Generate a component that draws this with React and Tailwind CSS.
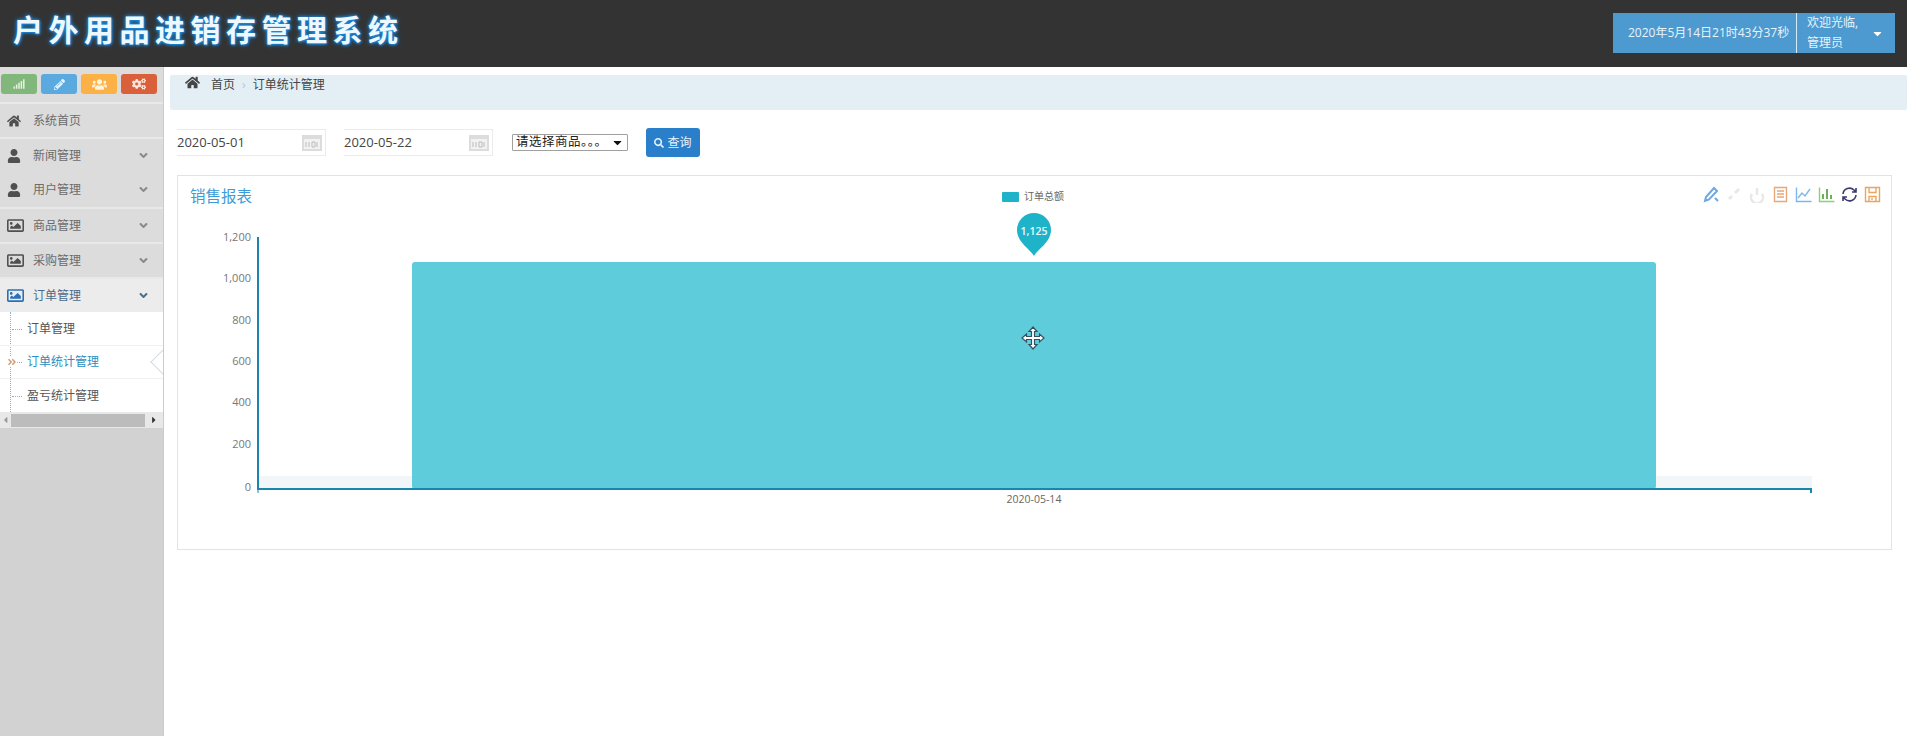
import React from "react";
import { FaHome, FaUser, FaRegImage, FaUsers, FaCogs, FaPencilAlt, FaSignal, FaSearch, FaAngleDown, FaAngleDoubleRight, FaCaretDown, FaCaretLeft, FaCaretRight } from "react-icons/fa";

const font = { fontFamily: '"Open Sans","Noto Sans CJK SC",sans-serif' };

function NavRow({ icon: Icon, label, arrow, active, sep, iconSize = 14 }) {
  return (
    <div className={`flex items-center h-[35px] pl-[7px] pr-[13px] ${sep ? "border-t-2 border-[#e8e8e8]" : ""} ${active ? "bg-[#ececec]" : "bg-[#dcdcdc]"}`}>
      <span className={`w-[26px] flex items-center shrink-0 ${active ? "text-[#2a6fb8]" : "text-[#505050]"}`}>
        <Icon size={iconSize} />
      </span>
      <span className={`text-[12px] ${active ? "text-[#4a6a8a]" : "text-[#6b6b6b]"}`}>{label}</span>
      {arrow && <FaAngleDown size={13} className={`ml-auto ${active ? "text-[#4a6f8f]" : "text-[#8a8a8a]"}`} />}
    </div>
  );
}

function SubRow({ label, active, border }) {
  return (
    <div className={`relative flex items-center h-[33px] pl-[27px] text-[12px] ${border ? "border-b border-[#f0f0f0]" : ""} ${active ? "text-[#2b8fc0]" : "text-[#555]"}`}>
      <span className="absolute left-[12px] top-1/2 w-[10px] border-t border-dotted border-[#aaa]" />
      {active && <FaAngleDoubleRight size={10} className="absolute left-[7px] top-[11px] text-[#d0a07c] bg-white" />}
      {label}
      {active && (
        <span className="absolute right-0 top-[7px] w-[18px] h-[18px] rotate-45 translate-x-[9px] bg-[#fff] border-l border-b border-[#cfdde5]" />
      )}
    </div>
  );
}

function DateInput({ value, className }) {
  return (
    <div className={`flex items-center justify-between w-[149px] h-[27px] border-y border-r border-[#ebebeb] text-[13px] text-[#444] ${className}`}>
      <span>{value}</span>
      <svg width="20" height="16" viewBox="0 0 20 16" className="mr-[3px]">
        <rect width="20" height="16" fill="#dcdcdc" />
        <rect x="2" y="4" width="16" height="10" fill="#f2f2f2" />
        <path d="M4 7v5M7 7v5M10 7h3v5h-3zM15 7v5" stroke="#bbb" fill="none" />
      </svg>
    </div>
  );
}

function Tool({ children }) {
  return <svg width="17" height="17" viewBox="0 0 17 17" fill="none" strokeWidth="1.4">{children}</svg>;
}

function Toolbar() {
  return (
    <div className="flex items-center gap-[6px] mt-[1px]">
      <Tool><path d="M2 15l1-4 8-9 3 3-8 8.5zM12 12l3 3" stroke="#6fa8e0" strokeWidth="2" /></Tool>
      <Tool><path d="M3 13l3-3M9 7l4-4" stroke="#e8e8e8" strokeWidth="3" /></Tool>
      <Tool><path d="M3 8a6 6 0 1 0 10 0M8 2v7" stroke="#e8e8e8" strokeWidth="2.5" /></Tool>
      <Tool><path d="M2.5 1.5h12v14h-12zM5 5h7M5 8h7M5 11h7" stroke="#e8a878" /></Tool>
      <Tool><path d="M1.5 1.5v14h15M3 12l4-5 3 3 5-7" stroke="#7cb8ee" /></Tool>
      <Tool><path d="M1.5 1.5v14h15" stroke="#8bd07a" /><path d="M5 13V8M9 13V3M13 13V9" stroke="#6cb05a" strokeWidth="2" /></Tool>
      <Tool><path d="M2 8a6.5 6.5 0 0 1 11-4l2 2M15 9a6.5 6.5 0 0 1-11 4l-2-2M15 2v4h-4M2 15v-4h4" stroke="#3d3a6e" strokeWidth="1.6" /></Tool>
      <Tool><path d="M1.5 1.5h14v14h-14zM5 1.5v5h7v-5M5 15.5v-5h7v5M8 12v2" stroke="#eba55f" /></Tool>
    </div>
  );
}

function Chart() {
  const ticks = [["1,200", 242], ["1,000", 283], ["800", 325], ["600", 366], ["400", 407], ["200", 449], ["0", 492]];
  return (
    <svg width="1713" height="339" viewBox="178 211 1713 339" className="block">
      <rect x="258" y="477" width="1554" height="13" fill="#f3f6f8" />
      <rect x="412" y="263" width="1244" height="227" rx="3" fill="#5fccdb" />
      <path d="M258 238V490H1811V494" stroke="#1a86b0" strokeWidth="2" fill="none" />
      <path d="M258 490v4" stroke="#1a86b0" />
      {ticks.map(([t, y]) => (
        <text key={t} x="251" y={y} textAnchor="end" fontSize="11" fill="#777">{t}</text>
      ))}
      <text x="1034" y="504" textAnchor="middle" fontSize="10.5" fill="#666">2020-05-14</text>
      <path d="M1034 257C1030 250 1017 243 1017 231A17 17 0 1 1 1051 231C1051 243 1038 250 1034 257Z" fill="#1fb3c9" />
      <text x="1034" y="236" textAnchor="middle" fontSize="10.5" fontWeight="600" fill="#eaf8fb">1,125</text>
      <g transform="translate(1033 339)" stroke="#35505f" strokeWidth="1.2" fill="#fff">
        <path d="M0-11L4-6.5H1.5V-1.5H6.5V-4L11 0 6.5 4V1.5H1.5V6.5H4L0 11-4 6.5H-1.5V1.5H-6.5V4L-11 0-6.5-4V-1.5H-1.5V-6.5H-4Z" />
      </g>
    </svg>
  );
}

export default function App() {
  return (
    <div className="h-[736px] flex flex-col overflow-hidden bg-white" style={font}>
      <header className="h-[67px] shrink-0 bg-[#333333] flex items-start justify-between pr-[12px]">
        <h1
          className="ml-[13px] mt-[8px] text-[30px] leading-[40px] font-bold tracking-[5.5px] text-[#eef8ff] [text-shadow:0_0_3px_#1c8ee0,0_0_5px_#1c8ee0,1px_1px_2px_#1c70c0]"
          style={{ fontFamily: '"Noto Sans CJK SC",sans-serif' }}
        >
          户外用品进销存管理系统
        </h1>
        <div className="mt-[13px] h-[40px] w-[282px] flex bg-[#4d9ad0] text-[#e8f3fa] text-[12px]">
          <div className="w-[184px] pl-[15px] flex items-center whitespace-nowrap border-r border-[#d8ecf8]">2020年5月14日21时43分37秒</div>
          <div className="flex-1 pl-[10px] pr-[11px] flex items-center justify-between">
            <span className="leading-[20px]">欢迎光临,<br />管理员</span>
            <FaCaretDown size={13} className="text-white" />
          </div>
        </div>
      </header>

      <div className="flex-1 flex min-h-0">
        <aside className="w-[164px] shrink-0 bg-[#d2d2d2] border-r border-[#a9d5ee]">
          <div className="h-[35px] bg-[#dcdcdc] flex items-start gap-[4px] pl-[1px] pt-[7px]">
            <div className="w-[36px] h-[20px] rounded-[3px] bg-[#82b77c] flex items-center justify-center text-[#e6f4e2]"><FaSignal size={12} /></div>
            <div className="w-[36px] h-[20px] rounded-[3px] bg-[#5aaae0] flex items-center justify-center text-[#e6f2fb]"><FaPencilAlt size={11} /></div>
            <div className="w-[36px] h-[20px] rounded-[3px] bg-[#fbb145] flex items-center justify-center text-[#fff3dc]"><FaUsers size={15} /></div>
            <div className="w-[36px] h-[20px] rounded-[3px] bg-[#d9603a] flex items-center justify-center text-[#fbe6dd]"><FaCogs size={14} /></div>
          </div>
          <NavRow icon={FaHome} label="系统首页" sep />
          <NavRow icon={FaUser} label="新闻管理" arrow sep />
          <NavRow icon={FaUser} label="用户管理" arrow />
          <NavRow icon={FaRegImage} label="商品管理" arrow sep iconSize={17} />
          <NavRow icon={FaRegImage} label="采购管理" arrow sep iconSize={17} />
          <NavRow icon={FaRegImage} label="订单管理" arrow sep active iconSize={17} />
          <div className="relative bg-white overflow-hidden h-[100px] pt-[1px]">
            <span className="absolute left-[10px] top-0 bottom-0 border-l border-dotted border-[#7fb8e0]" />
            <SubRow label="订单管理" border />
            <SubRow label="订单统计管理" active border />
            <SubRow label="盈亏统计管理" />
          </div>
          <div className="h-[16px] bg-[#e8e8e8] flex items-center">
            <FaCaretLeft size={10} className="text-[#999] w-[11px] shrink-0" />
            <div className="w-[134px] h-[13px] bg-[#bcbcbc]" />
            <FaCaretRight size={10} className="text-[#333] ml-[4px]" />
          </div>
        </aside>

        <main className="flex-1 min-w-0 pt-[8px] pl-[6px] text-[#333]">
          <div className="h-[35px] bg-[#e3eff5] flex items-start text-[12px] pl-[15px] rounded-[2px]">
            <FaHome size={15} className="text-[#444] mr-[11px]" />
            <span className="mt-[1px] text-[#444]">首页</span>
            <span className="mt-[1px] mx-[7px] text-[#b8c4cc]">›</span>
            <span className="mt-[1px] text-[#444]">订单统计管理</span>
          </div>

          <div className="flex items-center mt-[18px] pl-[7px]">
            <DateInput value="2020-05-01" />
            <DateInput value="2020-05-22" className="ml-[18px]" />
            <div className="ml-[19px] w-[116px] h-[17px] border border-[#a0a0a0] rounded-[1px] flex items-center justify-between pl-[3px] pr-[3px] text-[12.5px] text-[#222]">
              <span className="tracking-[0.5px]">请选择商品。。。</span>
              <FaCaretDown size={13} className="text-[#111]" />
            </div>
            <button className="ml-[18px] w-[54px] h-[29px] rounded-[3px] bg-[#2a7fcb] text-[#e6f2fb] text-[12px] flex items-center justify-center gap-[3px]">
              <FaSearch size={10} />查询
            </button>
          </div>

          <section className="ml-[7px] mt-[18px] w-[1715px] h-[375px] border border-[#e0e4e6]">
            <div className="h-[34px] flex items-start justify-between pl-[12px] pr-[10px] pt-[9px] relative">
              <span className="text-[15.5px] leading-[22px] text-[#3d9bd6]">销售报表</span>
              <div className="absolute left-[824px] top-[13px] flex items-center gap-[5px] text-[10px] text-[#666]">
                <span className="w-[17px] h-[10px] rounded-[1px] bg-[#1fb3c9]" />订单总额
              </div>
              <Toolbar />
            </div>
            <Chart />
          </section>
        </main>
      </div>
    </div>
  );
}
